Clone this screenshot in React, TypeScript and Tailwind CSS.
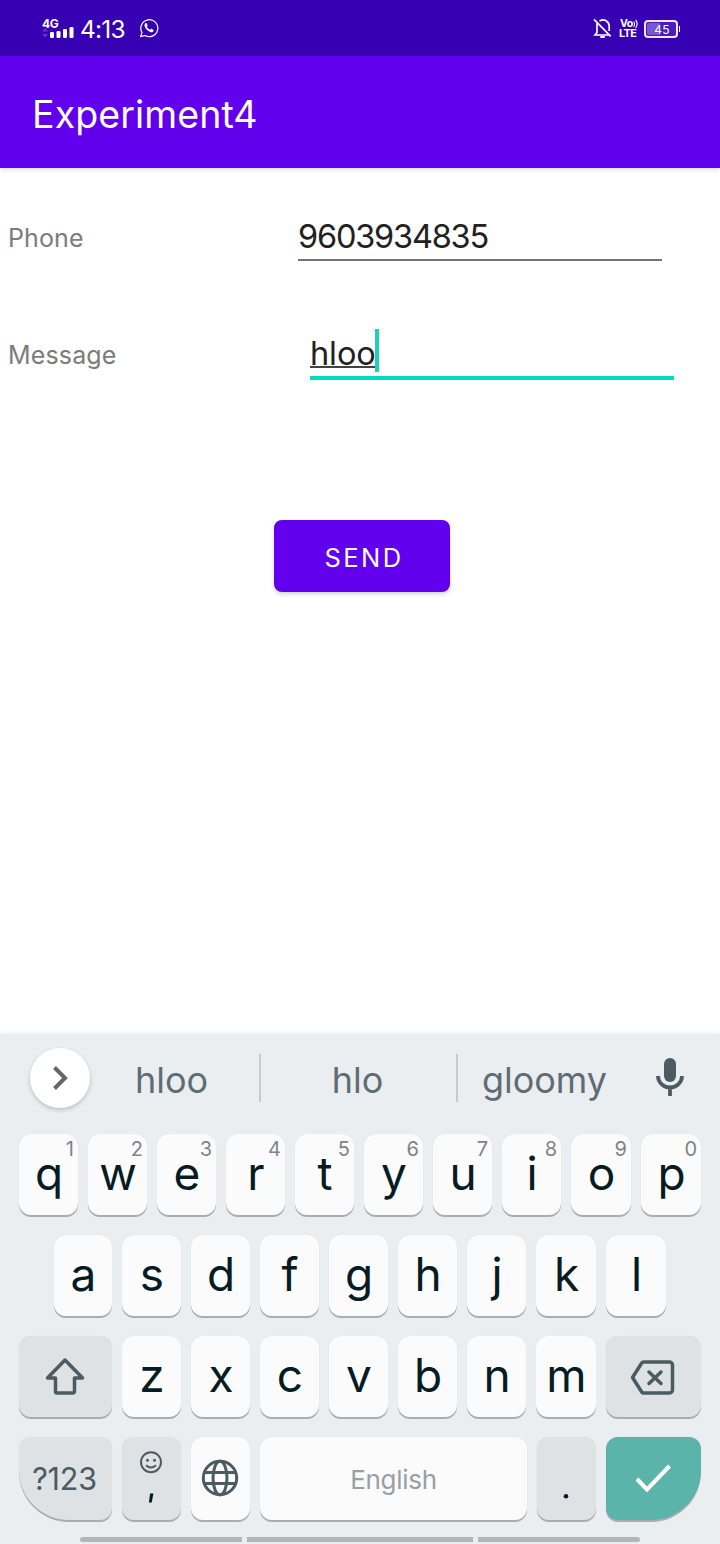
import type { ReactNode } from "react";

type LetterKey = { label: string; hint?: string; width: string };

const W59 = "w-[59px]";
const W60 = "w-[60px]";

const topRow: LetterKey[] = [
  { label: "q", hint: "1", width: W59 },
  { label: "w", hint: "2", width: W59 },
  { label: "e", hint: "3", width: W59 },
  { label: "r", hint: "4", width: W59 },
  { label: "t", hint: "5", width: W59 },
  { label: "y", hint: "6", width: W59 },
  { label: "u", hint: "7", width: W59 },
  { label: "i", hint: "8", width: W59 },
  { label: "o", hint: "9", width: W60 },
  { label: "p", hint: "0", width: W60 },
];

const homeRow: LetterKey[] = [
  { label: "a", width: "w-[58px]" },
  { label: "s", width: W59 },
  { label: "d", width: W59 },
  { label: "f", width: W59 },
  { label: "g", width: W59 },
  { label: "h", width: W59 },
  { label: "j", width: W59 },
  { label: "k", width: W60 },
  { label: "l", width: W60 },
];

const bottomRow: LetterKey[] = [
  { label: "z", width: W59 },
  { label: "x", width: W59 },
  { label: "c", width: W59 },
  { label: "v", width: W59 },
  { label: "b", width: W59 },
  { label: "n", width: W59 },
  { label: "m", width: W60 },
];

function Key({ className, children }: { className: string; children?: ReactNode }) {
  return (
    <button
      className={`relative flex shrink-0 items-center justify-center shadow-[0_2px_0_#aaadaf,0_0_1px_rgba(0,0,0,0.12)] ${className}`}
    >
      {children}
    </button>
  );
}

function Letter({ item }: { item: LetterKey }) {
  return (
    <Key className={`h-[81px] rounded-[12px] bg-[#fbfbfb] ${item.width}`}>
      <span className="pb-[3px] pl-px text-[46px] leading-[46px] font-normal text-[#061c25]">{item.label}</span>
      {item.hint && (
        <span className="absolute top-[4px] right-[4px] text-[20px] leading-[22px] font-normal text-[#7c8588]">
          {item.hint}
        </span>
      )}
    </Key>
  );
}

function StatusBar() {
  return (
    <header className="flex h-[56px] items-start justify-between bg-[#3700b3] pr-[40px] pl-[40px] text-white">
      <div className="flex">
        <div className="flex w-[40px] flex-col pt-[17px]">
          <span className="h-[10px] pl-[2px] text-[12px] leading-[13px] font-bold tracking-[-0.3px]">4G</span>
          <svg width="36" height="12" viewBox="0 0 36 12" fill="#fff">
            <path d="M2 4.6 5 1l3 3.6zM2 7h6l-3 3.6z" opacity=".22" />
            <rect x="10" y="5" width="4" height="6" rx="1.2" />
            <rect x="16.5" y="4" width="4" height="7" rx="1.2" />
            <rect x="23" y="2" width="4" height="9" rx="1.2" />
            <rect x="29.5" y="0" width="4" height="11" rx="1.2" />
          </svg>
        </div>
        <span className="w-[58px] pt-[15px] text-[24.5px] leading-[29px] font-normal tracking-[-0.8px]">4:13</span>
        <svg className="mt-[17px]" width="22" height="22" viewBox="0 0 22 22">
          <path
            d="M2.6 19.6 4 15.5A8.5 8.5 0 1 1 7 18.5z"
            fill="none"
            stroke="#fff"
            strokeWidth="1.2"
            strokeLinejoin="round"
          />
          <path
            d="M8.5 6.2c-.4-.3-.9-.2-1.200.1-.8.8-1 1.900-.6 3 1 2.700 3 4.700 5.700 5.700 1.100.4 2.300.1 3-.7.4-.4.4-1 0-1.300l-1.600-1c-.4-.3-.9-.2-1.200.2l-.5.6c-1.500-.6-2.600-1.700-3.300-3.100l.6-.7c.3-.3.3-.7.1-1.100z"
            fill="#fff"
          />
        </svg>
      </div>
      <div className="flex">
        <svg className="mt-[17px]" width="24" height="24" viewBox="0 0 24 24" fill="none" stroke="#fff" strokeWidth="1.7">
          <path d="M5 6.300v9.200L3 18h14.500M7.500 4.100C12 .9 17.200 4.500 17.200 9v5" />
          <path d="M2 2.300 18.700 19.300" />
          <path d="M8.300 20h4.500" strokeWidth="2" />
        </svg>
        <div className="flex w-[28px] flex-col pt-[19px] pl-[3px]">
          <div className="flex h-[9px] items-center pl-px">
            <span className="text-[10.500px] leading-[9px] font-bold tracking-[-0.5px]">Vo</span>
            <svg width="6" height="10" viewBox="0 0 6 10" fill="none" stroke="#fff" strokeWidth="1.100">
              <path d="M.7 2.500q1.600 2.500 0 5.500M2.600.8q3 4 0 8.200" />
            </svg>
          </div>
          <span className="text-[11px] leading-[11px] font-bold tracking-[-0.6px]">LTE</span>
        </div>
        <div className="flex items-center self-start pt-[20px]">
          <div className="relative flex h-[18px] w-[34px] items-center justify-center rounded-[4px] border-2 border-white/90 bg-[#4b1cb9]">
            <div className="absolute top-px bottom-px left-px w-[13px] rounded-l-[2px] bg-[#7957cf]" />
            <span className="relative pt-[2px] pl-[2px] text-[12px] leading-[12px] tracking-[0.2px]">45</span>
          </div>
          <div className="ml-[1px] h-[6px] w-px bg-white" />
        </div>
      </div>
    </header>
  );
}

function Suggestions() {
  return (
    <div className="flex h-[100px] items-start text-[36px] leading-[48px] font-normal text-[#5f6c72]">
      <button className="mt-[14px] ml-[30px] flex size-[60px] items-center justify-center rounded-full bg-white shadow-[0_2px_4px_rgba(0,0,0,0.2)]">
        <svg width="20" height="28" viewBox="0 0 20 28" fill="none" stroke="#666" strokeWidth="4">
          <path d="M4.500 3.500 15 14 4.500 24.500" />
        </svg>
      </button>
      <span className="mt-[22px] w-[163px] text-center">hloo</span>
      <span className="mt-[20px] ml-[6px] h-[48px] w-[2px] bg-[#c7cbce]" />
      <span className="mt-[22px] w-[193px] text-center">hlo</span>
      <span className="mt-[20px] ml-[2px] h-[48px] w-[2px] bg-[#c7cbce]" />
      <span className="mt-[22px] w-[173px] text-center">gloomy</span>
      <svg className="mt-[22px] ml-[23px]" width="32" height="42" viewBox="0 0 32 42">
        <rect x="10" y="2" width="12" height="24" rx="6" fill="#4b5b63" />
        <path d="M4 20a12 11.500 0 0 0 24 0M16 31.500V40" fill="none" stroke="#4b5b63" strokeWidth="3.800" />
      </svg>
    </div>
  );
}

function Keyboard() {
  return (
    <section className="flex h-[510px] flex-col bg-[#ebeef1] shadow-[0_-1px_4px_rgba(0,0,0,0.08)]">
      <Suggestions />
      <div className="flex flex-col gap-[20px] pl-[19px]">
        <div className="flex gap-[10px]">
          {topRow.map((k) => (
            <Letter key={k.label} item={k} />
          ))}
        </div>
        <div className="flex gap-[10px] pl-[35px]">
          {homeRow.map((k) => (
            <Letter key={k.label} item={k} />
          ))}
        </div>
        <div className="flex gap-[10px]">
          <Key className="h-[81px] w-[93px] rounded-[12px] bg-[#dee2e5]">
            <svg width="42" height="42" viewBox="0 0 42 42" fill="none" stroke="#4b5b63" strokeWidth="3.500" strokeLinejoin="round">
              <path d="M20 4 37.500 22H29.500v13.500a1.500 1.500 0 0 1-1.500 1.500H12a1.500 1.500 0 0 1-1.500-1.500V22H2.500z" />
            </svg>
          </Key>
          {bottomRow.map((k) => (
            <Letter key={k.label} item={k} />
          ))}
          <Key className="h-[81px] w-[95px] rounded-[12px] bg-[#dee2e5]">
            <svg className="mr-[2px]" width="46" height="38" viewBox="0 0 46 38" fill="none" stroke="#4b5b63" strokeWidth="3.500" strokeLinejoin="round">
              <path d="M13.500 4H39.500a3 3 0 0 1 3 3v25a3 3 0 0 1-3 3H13.500a2 2 0 0 1-1.600-.8L2.500 19.500 11.900 4.800A2 2 0 0 1 13.500 4z" />
              <path d="m19 14 12 11.500m0-11.500-12 11.500" strokeLinecap="round" />
            </svg>
          </Key>
        </div>
        <div className="flex gap-[10px]">
          <Key className="h-[83px] w-[93px] rounded-[12px] rounded-bl-[50px] bg-[#dee2e5]">
            <span className="pr-[2px] text-[30.500px] leading-[80px] font-normal tracking-[-0.2px] text-[#4b5b63]">?123</span>
          </Key>
          <Key className="h-[83px] w-[59px] rounded-[12px] bg-[#dee2e5]">
            <svg width="30" height="60" viewBox="0 0 30 60">
              <g fill="none" stroke="#4b5b63" strokeWidth="2">
                <circle cx="14" cy="13.200" r="10" />
                <path d="M9 16.200q5 4.500 10 0" />
              </g>
              <g fill="#4b5b63">
                <circle cx="10.500" cy="11.200" r="1.500" />
                <circle cx="17.500" cy="11.200" r="1.500" />
              </g>
              <path d="M13.100 44.500h3.300l-1.700 9h-2.800z" fill="#061c25" />
            </svg>
          </Key>
          <Key className="h-[83px] w-[59px] rounded-[12px] bg-[#fbfbfb]">
            <svg className="mr-px mb-px" width="40" height="40" viewBox="0 0 40 40" fill="none" stroke="#4b5b63" strokeWidth="3">
              <circle cx="20" cy="20" r="16.700" />
              <ellipse cx="20" cy="20" rx="7" ry="16.700" />
              <path d="M4.500 14.500h31M4.500 25.500h31" />
            </svg>
          </Key>
          <Key className="h-[83px] w-[267px] rounded-[12px] bg-[#fbfbfb]">
            <span className="pt-[2px] text-[26px] leading-[80px] font-normal tracking-[-0.3px] text-[#9a9fa3]">English</span>
          </Key>
          <Key className="h-[83px] w-[59px] rounded-[12px] bg-[#dee2e5]">
            <svg width="20" height="60" viewBox="0 0 20 60">
              <circle cx="9" cy="47.200" r="2.300" fill="#061c25" />
            </svg>
          </Key>
          <Key className="h-[83px] w-[95px] rounded-[12px] rounded-br-[50px] bg-[#5bb4aa]">
            <svg className="mr-px mb-px" width="40" height="32" viewBox="0 0 40 32" fill="none" stroke="#fff" strokeWidth="4">
              <path d="m4 17 10 10.500L36.500 4" />
            </svg>
          </Key>
        </div>
      </div>
      <div className="mt-[17px] flex h-[5px] gap-[5px] pl-[80px]">
        <span className="w-[162px] rounded-l-full bg-[#b3b6b9]" />
        <span className="w-[226px] bg-[#b3b6b9]" />
        <span className="w-[162px] rounded-r-full bg-[#b3b6b9]" />
      </div>
    </section>
  );
}

export default function App() {
  return (
    <div className="flex h-[1544px] w-[720px] flex-col overflow-hidden bg-white font-['Inter','Liberation_Sans',sans-serif]">
      <StatusBar />
      <div className="flex h-[112px] items-center bg-[#6200ee] pl-[32px] shadow-[0_1px_5px_rgba(0,0,0,0.18)]">
        <h1 className="pt-[6px] text-[37.500px] leading-[48px] font-normal tracking-[0.100px] text-white">Experiment4</h1>
      </div>
      <main className="flex h-[866px] flex-col">
        <div className="flex h-[93px] items-start pl-[8px]">
          <label className="mt-[54px] w-[290px] text-[25px] leading-[32px] font-normal tracking-[0.100px] text-[#7c7c7c]">Phone</label>
          <div className="flex h-[93px] w-[364px] flex-col border-b-2 border-[#757575] pt-[48px] text-[32.500px] leading-[42px] font-normal tracking-[-1.200px] text-[#212121]">
            9603934835
          </div>
        </div>
        <div className="mt-[68px] flex h-[51px] items-start pl-[8px]">
          <label className="mt-[10px] w-[302px] text-[25px] leading-[32px] font-normal tracking-[0.150px] text-[#7c7c7c]">Message</label>
          <div className="flex h-[51px] w-[364px] items-start border-b-4 border-[#03dac5] text-[32.500px] leading-[42px] font-normal text-[#212121]">
            <div className="mt-[3px] h-[36px] w-[66px] border-b-2 border-[#212121]/85 pt-px tracking-[-0.100px]">hloo</div>
            <span className="-ml-px h-[43px] w-[4px] bg-[#1ecfbc]" />
          </div>
        </div>
        <button className="mt-[140px] ml-[274px] h-[72px] w-[176px] rounded-[8px] bg-[#6200ee] pt-[3px] pl-[4px] text-[25.500px] leading-[32px] font-normal tracking-[2.400px] text-white shadow-[0_2px_4px_rgba(0,0,0,0.18)]">
          SEND
        </button>
      </main>
      <Keyboard />
    </div>
  );
}
